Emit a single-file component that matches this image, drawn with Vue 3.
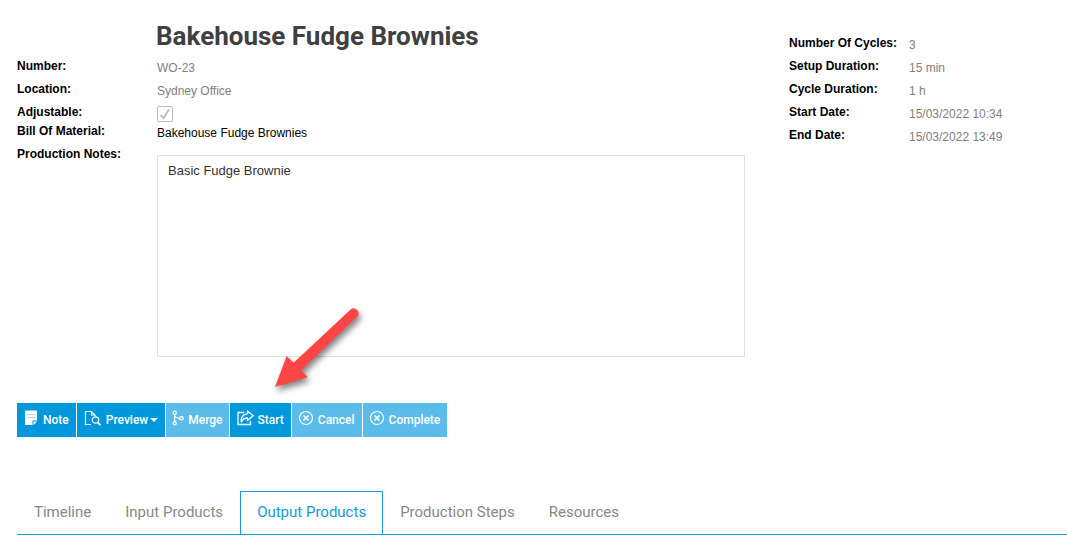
<script setup>
import { ref } from 'vue'

const notes = ref('Basic Fudge Brownie')
const cycles = [
  ['Number Of Cycles:', '3'],
  ['Setup Duration:', '15 min'],
  ['Cycle Duration:', '1 h'],
  ['Start Date:', '15/03/2022 10:34'],
  ['End Date:', '15/03/2022 13:49'],
]
const tabs = ['Timeline', 'Input Products', 'Output Products', 'Production Steps', 'Resources']
const active = ref('Output Products')
</script>

<template>
  <main class="page">
    <div class="details">
      <section class="main-info">
        <h1>Bakehouse Fudge Brownies</h1>
        <div class="row"><span class="label">Number:</span><span class="value">WO-23</span></div>
        <div class="row"><span class="label">Location:</span><span class="value">Sydney Office</span></div>
        <div class="row short">
          <label class="label" for="adjustable">Adjustable:</label>
          <span class="check">
            <input id="adjustable" type="checkbox" checked disabled />
            <svg viewBox="0 0 16 16" width="16" height="16"><path d="M3.5 9L6.5 12L12 3.5" fill="none" stroke="#bdbdbd" stroke-width="2" /></svg>
          </span>
        </div>
        <div class="row"><span class="label">Bill Of Material:</span><span class="value dark">Bakehouse Fudge Brownies</span></div>
        <div class="row notes">
          <label class="label" for="notes">Production Notes:</label>
          <textarea id="notes" v-model="notes"></textarea>
        </div>
      </section>
      <section class="side-info">
        <div v-for="[name, value] in cycles" :key="name" class="row">
          <span class="label">{{ name }}</span><span class="value">{{ value }}</span>
        </div>
      </section>
    </div>

    <div class="toolbar">
      <button type="button">
        <svg viewBox="0 0 15 16" width="15" height="16">
          <path d="M1 0.5H13V10.5H8.5V15H1Z" fill="#fff" />
          <path d="M9.5 11.5H13L9.5 15Z" fill="#fff" />
          <path d="M3 4.5H11M3 7.5H11" stroke="#a5daf3" fill="none" />
        </svg>
        Note
      </button>
      <button type="button">
        <svg viewBox="0 0 18 16" width="18" height="16" fill="none" stroke="#fff" stroke-width="1.2">
          <path d="M7 14.5H1.5V1.5H7.5L11 5V6M7.5 1.5V5H11" />
          <circle cx="11.5" cy="10" r="3.2" />
          <path d="M13.5 12.3L16.5 15.2" stroke-width="1.7" />
        </svg>
        Preview<i class="caret"></i>
      </button>
      <button type="button" disabled class="merge">
        <svg viewBox="0 0 12 16" width="12" height="16" fill="none" stroke="#fff" stroke-width="1.2">
          <circle cx="2.7" cy="2.7" r="1.6" />
          <circle cx="2.7" cy="13.3" r="1.6" />
          <circle cx="9.5" cy="8.3" r="1.7" />
          <path d="M2.7 4.3V11.7M2.7 5C3 7.5 5 8.3 7.8 8.3" />
        </svg>
        Merge
      </button>
      <button type="button">
        <svg viewBox="0 0 17 16" width="17" height="16" fill="none" stroke="#fff" stroke-width="1.3" stroke-linejoin="round">
          <path d="M7 2.5H1V14.5H13.5V11" />
          <path d="M10.5 1L16.2 5.8L10.5 10.5V8C7.5 8 5.5 9 4.3 12C3.6 7 6.5 3.8 10.5 3.8Z" />
        </svg>
        Start
      </button>
      <button v-for="name in ['Cancel', 'Complete']" :key="name" type="button" disabled>
        <svg viewBox="0 0 15 16" width="15" height="16" fill="none" stroke="#fff">
          <circle cx="7" cy="8" r="6.5" stroke-width="1.2" />
          <path d="M4.5 5.5L9.5 10.5M9.5 5.5L4.5 10.5" stroke-width="1.6" />
        </svg>
        {{ name }}
      </button>
      <svg class="arrow" viewBox="0 0 100 100" width="100" height="100">
        <path d="M8 86L19.7 55L26.7 61.7L83.6 8.4A5 5 0 0 1 90.4 15.6L34.3 69.3L40.5 76.3Z" fill="#ff4545" />
      </svg>
    </div>

    <nav class="tabs">
      <a v-for="tab in tabs" :key="tab" href="#" :class="{ active: tab === active }" @click.prevent="active = tab">{{ tab }}</a>
    </nav>
  </main>
</template>

<style>
body {
  margin: 0;
  background: #fff;
}
</style>

<style scoped>
.page {
  padding: 18px 0 0 17px;
  font: 12px/14px "Liberation Sans", Arial, sans-serif;
  color: #000;
}
.details {
  display: grid;
  grid-template-columns: 728fr 278fr;
  gap: 44px;
}
h1 {
  margin: 0 0 5px 139px;
  font: 700 26px/36px Roboto, sans-serif;
  color: #404040;
}
.row {
  display: grid;
  grid-template-columns: 140px 1fr;
  height: 23px;
}
.side-info {
  padding-top: 18px;
}
.side-info .row {
  grid-template-columns: 120px 1fr;
}
.row.short {
  height: 19px;
}
.label {
  font-weight: 700;
}
.value {
  padding-top: 2px;
  color: #808080;
}
.value.dark {
  color: #000;
}
.check {
  position: relative;
  width: 16px;
  height: 16px;
  margin-top: 1px;
}
.check input {
  appearance: none;
  box-sizing: border-box;
  display: block;
  width: 16px;
  height: 16px;
  margin: 0;
  border: 1px solid #bcbcbc;
  border-radius: 2px;
  background: #fff;
}
.check svg {
  position: absolute;
  top: 0;
  left: 0;
}
.row.notes {
  height: auto;
}
textarea {
  box-sizing: border-box;
  width: 100%;
  height: 202px;
  margin: 8px 0 0;
  padding: 7px 10px;
  border: 1px solid #e0e0e0;
  outline: none;
  resize: none;
  font: 13px/16px "Liberation Sans", Arial, sans-serif;
  color: #333;
}
.toolbar {
  position: relative;
  display: flex;
  gap: 1px;
  margin-top: 46px;
}
button {
  display: flex;
  align-items: center;
  gap: 4px;
  height: 34px;
  padding: 0 7px;
  border: 0;
  background: #0098dc;
  color: #fff;
  font: 500 12px/16px Roboto, sans-serif;
}
button:disabled {
  background: #5bbce9;
}
button.merge {
  padding: 0 6px;
}
button svg {
  margin-bottom: 4px;
}
.caret {
  margin-left: -2px;
  border: 4px solid transparent;
  border-top-color: #fff;
  border-bottom: 0;
}
.arrow {
  position: absolute;
  left: 250px;
  bottom: 36px;
  overflow: visible;
  filter: drop-shadow(2px 4px 3px rgba(0, 0, 0, 0.5));
  pointer-events: none;
}
.tabs {
  display: flex;
  margin-top: 54px;
  border-bottom: 1px solid #1a9ad6;
}
.tabs a {
  padding: 10px 16px 12px;
  border: 1px solid transparent;
  border-bottom: 0;
  font: 15px/20px Roboto, sans-serif;
  color: #888;
  text-decoration: none;
}
.tabs a.active {
  border-color: #1a9ad6;
  color: #0f9bdd;
}
</style>
